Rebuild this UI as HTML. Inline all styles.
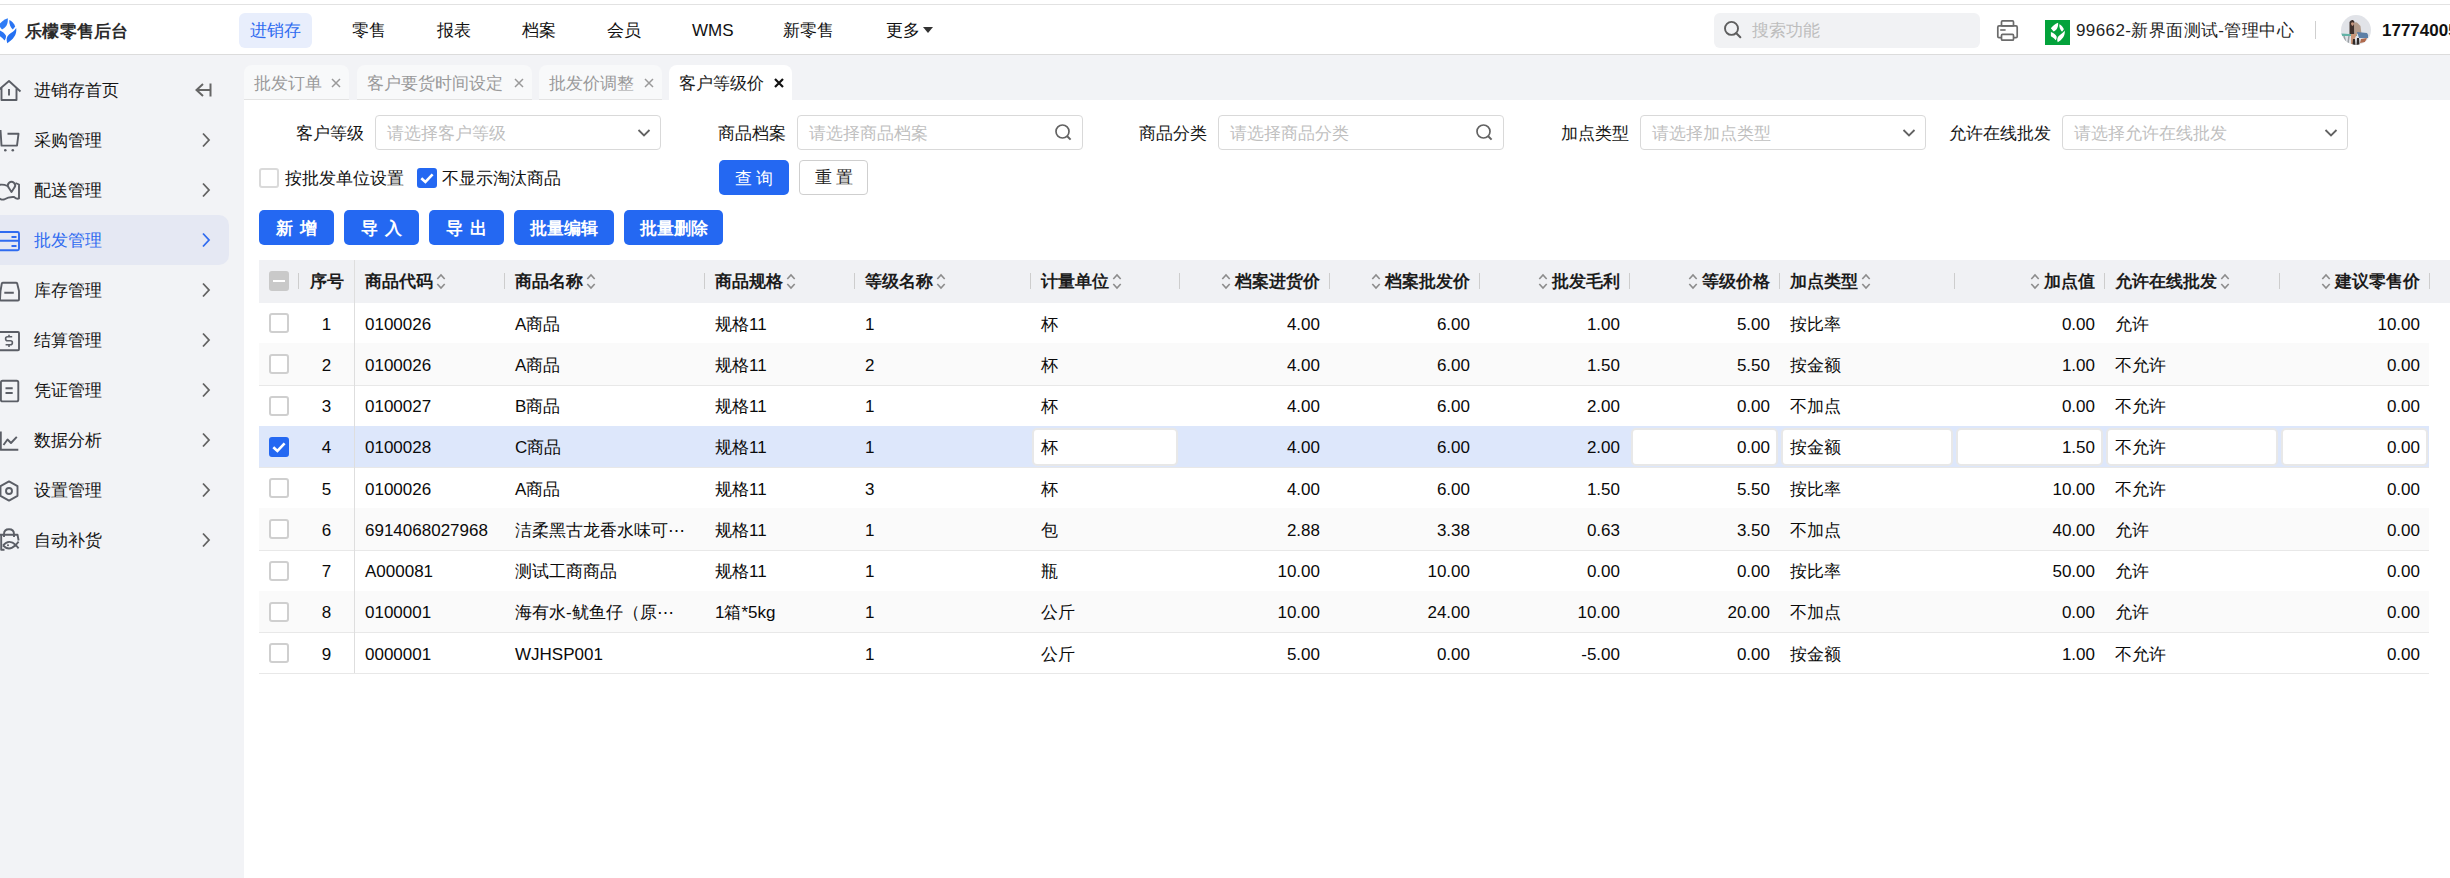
<!DOCTYPE html>
<html><head><meta charset="utf-8">
<style>
*{box-sizing:border-box;margin:0;padding:0}
html,body{width:2450px;height:878px;overflow:hidden;background:#fff}
body{position:relative;font-family:"Liberation Sans",sans-serif;font-size:17px;color:#111}
.abs{position:absolute}
.t{position:absolute;white-space:nowrap;line-height:20px}
#topline{left:0;top:4px;width:2450px;height:1px;background:#e2e2e2}
#hdr{left:0;top:5px;width:2450px;height:49px;background:#fff}
#hdrb{left:0;top:54px;width:2450px;height:1px;background:#dcdcdc}
#side{left:0;top:55px;width:244px;height:823px;background:#f2f3f6}
#tabbar{left:244px;top:55px;width:2206px;height:45px;background:#f2f3f6}
.tab{position:absolute;top:65px;height:35px;background:#f8f9fa;border-radius:8px 8px 0 0;border-bottom:1px solid #e3e3e3;color:#9a9a9a;line-height:37px;padding-left:10px;white-space:nowrap}
.tab.on{background:#fff;border-bottom:none;color:#1a1a1a;line-height:37px}
.x{position:absolute;top:0}
.nav{position:absolute;top:13px;height:35px;line-height:35px;white-space:nowrap;color:#111}
.side-item{position:absolute;left:0;width:229px;height:50px}
.side-item.on{background:#e5e8f3;border-radius:0 10px 10px 0}
.lbl{position:absolute;white-space:nowrap;line-height:37px;top:115px;color:#161616}
.inp{position:absolute;top:115px;width:286px;height:35px;border:1px solid #d9d9d9;border-radius:4px;background:#fff}
.ph{position:absolute;left:11px;top:0;line-height:35px;color:#bfbfbf;white-space:nowrap}
.btn{position:absolute;top:210px;height:35px;background:#2468f2;border-radius:5px;color:#fff;text-align:center;line-height:37px;font-weight:bold;white-space:nowrap}
.cb{position:absolute;width:20px;height:20px;border:2px solid #cfcfcf;border-radius:3px;background:#fff}
.cb.on{background:#2468f2;border-color:#2468f2}
.th{position:absolute;top:260px;height:43px;line-height:43px;font-weight:bold;color:#1c1c1c;white-space:nowrap}
.sep{position:absolute;top:273px;width:1px;height:16px;background:#cdcdcd}
.td{position:absolute;line-height:20px;white-space:nowrap;color:#0a0a0a}
.row{position:absolute;left:259px;width:2170px}
.edit{position:absolute;background:#fff;border:2px solid #e8e8e8;border-radius:5px}
</style></head><body>
<div class="abs" id="topline"></div>
<div class="abs" id="hdr"></div>
<div class="abs" id="hdrb"></div>
<div class="abs" id="side"></div>
<div class="abs" id="tabbar"></div>

<svg class="abs" style="left:0;top:14px;overflow:visible" width="24" height="32" viewBox="0 14 24 32">
<path d="M7.8 18.2 C3.5 19.8 0.5 22.5 -1.5 25.2 L2 29.4 C5.6 27.8 8.2 24.5 7.8 18.2Z" fill="#2e7cf6"/>
<path d="M9.3 20 C9 24 10.5 27.5 12.8 29.6 L15.2 26.4 C14 23.5 12 21.2 9.3 20Z" fill="#2a74f3"/>
<path d="M-1.5 30 C1.5 31 4.5 33 5.9 35.6 C6.2 37.3 5.6 39 4.6 40.4 C2.5 38 0.5 36.5 -1.5 35.5Z" fill="#2a74f3"/>
<path d="M16.2 28 C17.2 34.8 12.8 39.8 7.3 43.2 C6 40 6.6 36.5 9 34.6 C11.5 32.5 14.5 31 16.2 28Z" fill="#2470f2"/>
</svg>
<div class="t" style="left:25px;top:22px;font-weight:bold;font-size:17px;letter-spacing:0.3px;color:#2b2b2b">乐檬零售后台</div>
<div class="abs" style="left:239px;top:13px;width:73px;height:35px;background:#e8eefc;border-radius:6px"></div>

<div class="nav" style="left:250px;color:#2f6bf0;">进销存</div>
<div class="nav" style="left:352px;">零售</div>
<div class="nav" style="left:437px;">报表</div>
<div class="nav" style="left:522px;">档案</div>
<div class="nav" style="left:607px;">会员</div>
<div class="nav" style="left:692px;">WMS</div>
<div class="nav" style="left:783px;">新零售</div>
<div class="nav" style="left:886px;">更多</div>
<svg class="abs" style="left:923px;top:27px" width="10" height="6"><path d="M0 0 L10 0 L5 6Z" fill="#333"/></svg>
<div class="abs" style="left:1714px;top:13px;width:266px;height:35px;background:#f1f2f4;border-radius:6px"></div>
<svg class="abs" style="left:1715px;top:15px" width="35" height="30" viewBox="0 0 35 30"><circle cx="16.5" cy="13.4" r="6.5" fill="none" stroke="#5e5e5e" stroke-width="1.9"/><path d="M21.3 18.3 L25.3 22.2" stroke="#5e5e5e" stroke-width="2.1" stroke-linecap="round"/></svg>
<div class="t" style="left:1752px;top:21px;color:#bdbdbd">搜索功能</div>
<svg class="abs" style="left:1990px;top:15px" width="35" height="30" viewBox="1990 15 35 30"><g fill="none" stroke="#6b6b6b" stroke-width="1.7"><rect x="2001.5" y="20.9" width="12" height="5" rx="1"/><path d="M2001 37.6 H1999 Q1997.8 37.6 1997.8 36.4 V27.2 Q1997.8 25.9 1999 25.9 H2016 Q2017.2 25.9 2017.2 27.2 V36.4 Q2017.2 37.6 2016 37.6 H2014"/><rect x="2001.5" y="34.4" width="12" height="5.8" rx="1"/><path d="M2000.2 30 H2005.6" stroke-width="1.6"/></g></svg>
<div class="abs" style="left:2045px;top:20px;width:25px;height:25px;background:#03a23b"></div>
<svg class="abs" style="left:2045px;top:20px" width="25" height="25" viewBox="0 0 25 25"><g transform="translate(12.9 12.6) scale(0.78) translate(-7.5 -30.7)" fill="#fff">
<path d="M7.8 18.2 C3.5 19.8 0.5 22.5 -1.5 25.2 L2 29.4 C5.6 27.8 8.2 24.5 7.8 18.2Z"/>
<path d="M9.3 20 C9 24 10.5 27.5 12.8 29.6 L15.2 26.4 C14 23.5 12 21.2 9.3 20Z"/>
<path d="M-1.5 30 C1.5 31 4.5 33 5.9 35.6 C6.2 37.3 5.6 39 4.6 40.4 C2.5 38 0.5 36.5 -1.5 35.5Z"/>
<path d="M16.2 28 C17.2 34.8 12.8 39.8 7.3 43.2 C6 40 6.6 36.5 9 34.6 C11.5 32.5 14.5 31 16.2 28Z"/>
</g></svg>
<div class="t" style="left:2076px;top:21px;color:#1f1f1f;letter-spacing:0.4px">99662-新界面测试-管理中心</div>
<div class="abs" style="left:2315px;top:21px;width:1px;height:18px;background:#cfcfcf"></div>
<svg class="abs" style="left:2341px;top:15px" width="30" height="30" viewBox="0 0 30 30"><defs><clipPath id="av"><circle cx="15" cy="15" r="15"/></clipPath></defs><g clip-path="url(#av)"><rect width="30" height="30" fill="#e1e3e8"/>
<path d="M0 18.5 L16 19.5 L16 21 L0 21 Z" fill="#62b2a6"/>
<path d="M3 21 L5 28 M8 21 L7 28" stroke="#9aa0a4" stroke-width="1.5"/>
<path d="M8.5 7 Q10 4.5 12 5 Q14 6 13.5 9 L13.5 19 L8.5 19 Z" fill="#3e302c"/>
<path d="M13 8 Q15 6.5 17 8.5 L19.5 11 L20.5 19 L13.5 19 Z" fill="#b39c8c"/>
<path d="M10 8 Q11.5 6.5 13 8 Q13 10.5 11.5 11 Q10 10.5 10 8Z" fill="#c89880"/>
<path d="M16 17 L26 18 Q28 20 27 23 L18 23 Z" fill="#5d7fa6"/>
<path d="M10 19 L16 19 L14 23 L12 29 L10 29 Z" fill="#c99578"/>
<path d="M12 24 L14 24 L14.5 30 L11.5 30 Z M16 23 L18 23 L18.5 30 L15.5 30 Z" fill="#2f2a28"/>
<path d="M20 24 L26 23 L24 27 L19 28 Z" fill="#b06a4c"/>
</g></svg>
<div class="t" style="left:2382px;top:21px;font-weight:bold;font-size:17px;color:#111">17774005</div>

<div class="t" style="left:34px;top:81px;color:#141414">进销存首页</div>
<svg class="abs" style="left:194px;top:82px" width="18" height="16" viewBox="0 0 18 16"><path d="M9 2 L2.5 8 L9 14 M2.5 8 H15.5 M16.5 1.5 V14.5" fill="none" stroke="#666" stroke-width="2"/></svg>
<div class="t" style="left:34px;top:131px;color:#141414">采购管理</div>
<svg class="abs" style="left:200px;top:132px" width="12" height="16" viewBox="0 0 12 16"><path d="M3 1.5 L9 8 L3 14.5" fill="none" stroke="#626262" stroke-width="1.8"/></svg>
<div class="t" style="left:34px;top:181px;color:#141414">配送管理</div>
<svg class="abs" style="left:200px;top:182px" width="12" height="16" viewBox="0 0 12 16"><path d="M3 1.5 L9 8 L3 14.5" fill="none" stroke="#626262" stroke-width="1.8"/></svg>
<div class="side-item on" style="top:215px"></div>
<div class="t" style="left:34px;top:231px;color:#2f6bf0">批发管理</div>
<svg class="abs" style="left:200px;top:232px" width="12" height="16" viewBox="0 0 12 16"><path d="M3 1.5 L9 8 L3 14.5" fill="none" stroke="#2f6bf0" stroke-width="1.8"/></svg>
<div class="t" style="left:34px;top:281px;color:#141414">库存管理</div>
<svg class="abs" style="left:200px;top:282px" width="12" height="16" viewBox="0 0 12 16"><path d="M3 1.5 L9 8 L3 14.5" fill="none" stroke="#626262" stroke-width="1.8"/></svg>
<div class="t" style="left:34px;top:331px;color:#141414">结算管理</div>
<svg class="abs" style="left:200px;top:332px" width="12" height="16" viewBox="0 0 12 16"><path d="M3 1.5 L9 8 L3 14.5" fill="none" stroke="#626262" stroke-width="1.8"/></svg>
<div class="t" style="left:34px;top:381px;color:#141414">凭证管理</div>
<svg class="abs" style="left:200px;top:382px" width="12" height="16" viewBox="0 0 12 16"><path d="M3 1.5 L9 8 L3 14.5" fill="none" stroke="#626262" stroke-width="1.8"/></svg>
<div class="t" style="left:34px;top:431px;color:#141414">数据分析</div>
<svg class="abs" style="left:200px;top:432px" width="12" height="16" viewBox="0 0 12 16"><path d="M3 1.5 L9 8 L3 14.5" fill="none" stroke="#626262" stroke-width="1.8"/></svg>
<div class="t" style="left:34px;top:481px;color:#141414">设置管理</div>
<svg class="abs" style="left:200px;top:482px" width="12" height="16" viewBox="0 0 12 16"><path d="M3 1.5 L9 8 L3 14.5" fill="none" stroke="#626262" stroke-width="1.8"/></svg>
<div class="t" style="left:34px;top:531px;color:#141414">自动补货</div>
<svg class="abs" style="left:200px;top:532px" width="12" height="16" viewBox="0 0 12 16"><path d="M3 1.5 L9 8 L3 14.5" fill="none" stroke="#626262" stroke-width="1.8"/></svg>
<svg class="abs" style="left:0;top:0;overflow:visible" width="30" height="600" viewBox="0 0 30 600">
<g fill="none" stroke="#5b5e66" stroke-width="1.9" stroke-linejoin="round">
<path d="M-1 89.5 L9 81 L20.5 91.5 M1.5 88 V100 H16.5 V87.5 M9 89 V95.5"/>
<path d="M0.5 130 L1.5 145.6 H17 L18.5 133.8 H7.5"/>
<path d="M-1 185 Q3 184 7.5 186 M15.5 183 L19 184.5 V198.5 Q17 199.5 14 197 Q9 196.5 4 199.5 Q1 200 -1 198"/>
<path d="M11.5 192 L8.6 187.6 A3.6 3.6 0 1 1 14.4 187.6 Z"/>
<path d="M-3 232 H17.5 Q19 232 19 233.5 V248.7 Q19 250.2 17.5 250.2 H-3 M-3 240.8 H19 M11.5 237 H16.5 M11.5 246 H16.5" stroke="#2f6bf0"/>
<path d="M0.5 291 L1.8 283.5 Q2.2 282.7 3 282.7 H16 Q16.8 282.7 17.2 283.5 L19 291 V299.5 Q19 300.5 18 300.5 H1 Q0 300.5 0 299.5 Z M4.3 292.8 H13.8"/>
<path d="M-3 332 H18 Q19 332 19 333 V349.2 Q19 350.2 18 350.2 H-3"/>
<path d="M12.2 336.8 H7.6 Q5.6 336.8 5.6 338.8 Q5.6 340.8 7.6 340.8 H10.4 Q12.4 340.8 12.4 342.8 Q12.4 344.8 10.4 344.8 H5.6 M9 334.8 V336.8 M9 344.8 V347" stroke-width="1.6"/>
<path d="M2.5 380.7 H16.7 Q18.3 380.7 18.3 382.3 V399.8 Q18.3 401.4 16.7 401.4 H2.5 Q0.9 401.4 0.9 399.8 V382.3 Q0.9 380.7 2.5 380.7 Z M5.5 388.2 H12.7 M5.5 393 H12.7"/>
<path d="M0.8 431.5 V449.8 H18.3 M3.5 445 L7.5 439.5 L11 443 L16.8 436.8"/>
<path d="M9 481.4 L17.5 486.2 V495.8 L9 500.6 L0.5 495.8 V486.2 Z"/>
<circle cx="9" cy="491" r="3"/>
<path d="M4 537 V534 Q4 529.2 9 529.2 Q14 529.2 14 534 V537 M0 534.8 H17.5 L18.6 540.5 M1.2 535 V549.7 H4.5 M3 545.5 Q9 538.5 15.8 545 Q9 551.5 3 545.5 M15.8 545 L18.6 541.6 M15.8 545 L18.6 548.4"/>
</g>
<circle cx="5.3" cy="150.3" r="1.3" fill="#5b5e66"/><circle cx="12.8" cy="150.3" r="1.3" fill="#5b5e66"/><circle cx="8" cy="545.2" r="1" fill="#5b5e66"/>
</svg>
<div class="tab" style="left:244px;width:105px">批发订单</div>
<svg class="abs" style="left:331px;top:78px" width="10" height="10" viewBox="0 0 10 10"><path d="M1 1 L9 9 M9 1 L1 9" stroke="#9a9a9a" stroke-width="1.5"/></svg>
<div class="tab" style="left:357px;width:175px">客户要货时间设定</div>
<svg class="abs" style="left:514px;top:78px" width="10" height="10" viewBox="0 0 10 10"><path d="M1 1 L9 9 M9 1 L1 9" stroke="#9a9a9a" stroke-width="1.5"/></svg>
<div class="tab" style="left:539px;width:123px">批发价调整</div>
<svg class="abs" style="left:644px;top:78px" width="10" height="10" viewBox="0 0 10 10"><path d="M1 1 L9 9 M9 1 L1 9" stroke="#9a9a9a" stroke-width="1.5"/></svg>
<div class="tab on" style="left:669px;width:123px">客户等级价</div>
<svg class="abs" style="left:774px;top:78px" width="10" height="10" viewBox="0 0 10 10"><path d="M1 1 L9 9 M9 1 L1 9" stroke="#111" stroke-width="2.2"/></svg>
<div class="lbl" style="left:164px;width:200px;text-align:right">客户等级</div>
<div class="inp" style="left:375px"><div class="ph">请选择客户等级</div></div>
<svg class="abs" style="left:637px;top:128px" width="14" height="10" viewBox="0 0 14 10"><path d="M1.5 2 L7 7.5 L12.5 2" fill="none" stroke="#626262" stroke-width="1.8"/></svg>
<div class="lbl" style="left:586px;width:200px;text-align:right">商品档案</div>
<div class="inp" style="left:797px"><div class="ph">请选择商品档案</div></div>
<svg class="abs" style="left:1054px;top:123px" width="20" height="20" viewBox="0 0 20 20"><circle cx="8.5" cy="8.5" r="6.5" fill="none" stroke="#626262" stroke-width="1.7"/><path d="M13.2 13.2 L16.6 16.6" stroke="#626262" stroke-width="2" stroke-linecap="butt"/></svg>
<div class="lbl" style="left:1007px;width:200px;text-align:right">商品分类</div>
<div class="inp" style="left:1218px"><div class="ph">请选择商品分类</div></div>
<svg class="abs" style="left:1475px;top:123px" width="20" height="20" viewBox="0 0 20 20"><circle cx="8.5" cy="8.5" r="6.5" fill="none" stroke="#626262" stroke-width="1.7"/><path d="M13.2 13.2 L16.6 16.6" stroke="#626262" stroke-width="2" stroke-linecap="butt"/></svg>
<div class="lbl" style="left:1429px;width:200px;text-align:right">加点类型</div>
<div class="inp" style="left:1640px"><div class="ph">请选择加点类型</div></div>
<svg class="abs" style="left:1902px;top:128px" width="14" height="10" viewBox="0 0 14 10"><path d="M1.5 2 L7 7.5 L12.5 2" fill="none" stroke="#626262" stroke-width="1.8"/></svg>
<div class="lbl" style="left:1851px;width:200px;text-align:right">允许在线批发</div>
<div class="inp" style="left:2062px"><div class="ph">请选择允许在线批发</div></div>
<svg class="abs" style="left:2324px;top:128px" width="14" height="10" viewBox="0 0 14 10"><path d="M1.5 2 L7 7.5 L12.5 2" fill="none" stroke="#626262" stroke-width="1.8"/></svg>
<div class="cb" style="left:259px;top:168px;border-color:#dadada"></div>
<div class="t" style="left:285px;top:169px">按批发单位设置</div>
<div class="cb on" style="left:417px;top:168px"></div>
<svg class="abs" style="left:417px;top:168px" width="20" height="20" viewBox="0 0 20 20"><path d="M4.3 10.2 L8.4 14 L15.6 6.4" fill="none" stroke="#fff" stroke-width="2.6"/></svg>
<div class="t" style="left:442px;top:169px">不显示淘汰商品</div>
<div class="btn" style="left:719px;top:160px;width:70px;letter-spacing:4px;text-indent:4px;font-weight:normal">查询</div>
<div class="abs" style="left:799px;top:160px;width:69px;height:35px;border:1px solid #cfcfcf;border-radius:4px;background:#fff;text-align:center;line-height:33px;letter-spacing:4px;text-indent:4px;color:#222">重置</div>
<div class="btn" style="left:259px;width:75px;letter-spacing:7px;text-indent:7px;">新增</div>
<div class="btn" style="left:344px;width:75px;letter-spacing:7px;text-indent:7px;">导入</div>
<div class="btn" style="left:429px;width:75px;letter-spacing:7px;text-indent:7px;">导出</div>
<div class="btn" style="left:514px;width:100px;">批量编辑</div>
<div class="btn" style="left:624px;width:99px;">批量删除</div>
<div class="abs" style="left:259px;top:260px;width:2191px;height:43px;background:#f0f1f4"></div>
<div class="row" style="top:343.25px;height:1px;background:#e8e8e8"></div>
<div class="row" style="top:343.25px;height:41.25px;background:#fafafa"></div>
<div class="row" style="top:384.50px;height:1px;background:#e8e8e8"></div>
<div class="row" style="top:425.75px;height:1px;background:#e8e8e8"></div>
<div class="row" style="top:425.75px;height:41.25px;background:#dde7fb"></div>
<div class="row" style="top:467.00px;height:1px;background:#e8e8e8"></div>
<div class="row" style="top:508.25px;height:1px;background:#e8e8e8"></div>
<div class="row" style="top:508.25px;height:41.25px;background:#fafafa"></div>
<div class="row" style="top:549.50px;height:1px;background:#e8e8e8"></div>
<div class="row" style="top:590.75px;height:1px;background:#e8e8e8"></div>
<div class="row" style="top:590.75px;height:41.25px;background:#fafafa"></div>
<div class="row" style="top:632.00px;height:1px;background:#e8e8e8"></div>
<div class="row" style="top:673.25px;height:1px;background:#e8e8e8"></div>
<div class="abs" style="left:354px;top:260px;width:1px;height:413px;background:#dedede"></div>
<div class="abs" style="left:269px;top:271px;width:20px;height:20px;background:#c9c9c9;border-radius:3px"></div>
<div class="abs" style="left:273px;top:280px;width:12px;height:2px;background:#fff"></div>
<div class="sep" style="left:298px"></div>
<div class="th" style="left:299px;width:55px;text-align:center">序号</div>
<div class="th" style="left:365px">商品代码<svg style="display:inline-block;vertical-align:middle;margin:-3px 2px 0 3px" width="10" height="17" viewBox="0 0 10 17"><path d="M1.3 6 L5 2 L8.7 6 M1.3 11 L5 15 L8.7 11" fill="none" stroke="#8c8c8c" stroke-width="1.6"/></svg></div>
<div class="sep" style="left:504px"></div>
<div class="th" style="left:515px">商品名称<svg style="display:inline-block;vertical-align:middle;margin:-3px 2px 0 3px" width="10" height="17" viewBox="0 0 10 17"><path d="M1.3 6 L5 2 L8.7 6 M1.3 11 L5 15 L8.7 11" fill="none" stroke="#8c8c8c" stroke-width="1.6"/></svg></div>
<div class="sep" style="left:704px"></div>
<div class="th" style="left:715px">商品规格<svg style="display:inline-block;vertical-align:middle;margin:-3px 2px 0 3px" width="10" height="17" viewBox="0 0 10 17"><path d="M1.3 6 L5 2 L8.7 6 M1.3 11 L5 15 L8.7 11" fill="none" stroke="#8c8c8c" stroke-width="1.6"/></svg></div>
<div class="sep" style="left:854px"></div>
<div class="th" style="left:865px">等级名称<svg style="display:inline-block;vertical-align:middle;margin:-3px 2px 0 3px" width="10" height="17" viewBox="0 0 10 17"><path d="M1.3 6 L5 2 L8.7 6 M1.3 11 L5 15 L8.7 11" fill="none" stroke="#8c8c8c" stroke-width="1.6"/></svg></div>
<div class="sep" style="left:1030px"></div>
<div class="th" style="left:1041px">计量单位<svg style="display:inline-block;vertical-align:middle;margin:-3px 2px 0 3px" width="10" height="17" viewBox="0 0 10 17"><path d="M1.3 6 L5 2 L8.7 6 M1.3 11 L5 15 L8.7 11" fill="none" stroke="#8c8c8c" stroke-width="1.6"/></svg></div>
<div class="sep" style="left:1179px"></div>
<div class="th" style="left:1179px;width:141px;text-align:right"><svg style="display:inline-block;vertical-align:middle;margin:-3px 4px 0 0" width="10" height="17" viewBox="0 0 10 17"><path d="M1.3 6 L5 2 L8.7 6 M1.3 11 L5 15 L8.7 11" fill="none" stroke="#8c8c8c" stroke-width="1.6"/></svg>档案进货价</div>
<div class="sep" style="left:1329px"></div>
<div class="th" style="left:1329px;width:141px;text-align:right"><svg style="display:inline-block;vertical-align:middle;margin:-3px 4px 0 0" width="10" height="17" viewBox="0 0 10 17"><path d="M1.3 6 L5 2 L8.7 6 M1.3 11 L5 15 L8.7 11" fill="none" stroke="#8c8c8c" stroke-width="1.6"/></svg>档案批发价</div>
<div class="sep" style="left:1479px"></div>
<div class="th" style="left:1479px;width:141px;text-align:right"><svg style="display:inline-block;vertical-align:middle;margin:-3px 4px 0 0" width="10" height="17" viewBox="0 0 10 17"><path d="M1.3 6 L5 2 L8.7 6 M1.3 11 L5 15 L8.7 11" fill="none" stroke="#8c8c8c" stroke-width="1.6"/></svg>批发毛利</div>
<div class="sep" style="left:1629px"></div>
<div class="th" style="left:1629px;width:141px;text-align:right"><svg style="display:inline-block;vertical-align:middle;margin:-3px 4px 0 0" width="10" height="17" viewBox="0 0 10 17"><path d="M1.3 6 L5 2 L8.7 6 M1.3 11 L5 15 L8.7 11" fill="none" stroke="#8c8c8c" stroke-width="1.6"/></svg>等级价格</div>
<div class="sep" style="left:1779px"></div>
<div class="th" style="left:1790px">加点类型<svg style="display:inline-block;vertical-align:middle;margin:-3px 2px 0 3px" width="10" height="17" viewBox="0 0 10 17"><path d="M1.3 6 L5 2 L8.7 6 M1.3 11 L5 15 L8.7 11" fill="none" stroke="#8c8c8c" stroke-width="1.6"/></svg></div>
<div class="sep" style="left:1954px"></div>
<div class="th" style="left:1954px;width:141px;text-align:right"><svg style="display:inline-block;vertical-align:middle;margin:-3px 4px 0 0" width="10" height="17" viewBox="0 0 10 17"><path d="M1.3 6 L5 2 L8.7 6 M1.3 11 L5 15 L8.7 11" fill="none" stroke="#8c8c8c" stroke-width="1.6"/></svg>加点值</div>
<div class="sep" style="left:2104px"></div>
<div class="th" style="left:2115px">允许在线批发<svg style="display:inline-block;vertical-align:middle;margin:-3px 2px 0 3px" width="10" height="17" viewBox="0 0 10 17"><path d="M1.3 6 L5 2 L8.7 6 M1.3 11 L5 15 L8.7 11" fill="none" stroke="#8c8c8c" stroke-width="1.6"/></svg></div>
<div class="sep" style="left:2279px"></div>
<div class="th" style="left:2279px;width:141px;text-align:right"><svg style="display:inline-block;vertical-align:middle;margin:-3px 4px 0 0" width="10" height="17" viewBox="0 0 10 17"><path d="M1.3 6 L5 2 L8.7 6 M1.3 11 L5 15 L8.7 11" fill="none" stroke="#8c8c8c" stroke-width="1.6"/></svg>建议零售价</div>
<div class="sep" style="left:2429px"></div>
<div class="cb" style="left:269px;top:313.0px"></div>
<div class="td" style="left:299px;width:55px;top:314.5px;text-align:center">1</div>
<div class="td" style="left:365px;top:314.5px">0100026</div>
<div class="td" style="left:515px;top:314.5px">A商品</div>
<div class="td" style="left:715px;top:314.5px">规格11</div>
<div class="td" style="left:865px;top:314.5px">1</div>
<div class="td" style="left:1041px;top:314.5px">杯</div>
<div class="td" style="left:1179px;width:141px;top:314.5px;text-align:right">4.00</div>
<div class="td" style="left:1329px;width:141px;top:314.5px;text-align:right">6.00</div>
<div class="td" style="left:1479px;width:141px;top:314.5px;text-align:right">1.00</div>
<div class="td" style="left:1629px;width:141px;top:314.5px;text-align:right">5.00</div>
<div class="td" style="left:1790px;top:314.5px">按比率</div>
<div class="td" style="left:1954px;width:141px;top:314.5px;text-align:right">0.00</div>
<div class="td" style="left:2115px;top:314.5px">允许</div>
<div class="td" style="left:2279px;width:141px;top:314.5px;text-align:right">10.00</div>
<div class="cb" style="left:269px;top:354.2px"></div>
<div class="td" style="left:299px;width:55px;top:355.8px;text-align:center">2</div>
<div class="td" style="left:365px;top:355.8px">0100026</div>
<div class="td" style="left:515px;top:355.8px">A商品</div>
<div class="td" style="left:715px;top:355.8px">规格11</div>
<div class="td" style="left:865px;top:355.8px">2</div>
<div class="td" style="left:1041px;top:355.8px">杯</div>
<div class="td" style="left:1179px;width:141px;top:355.8px;text-align:right">4.00</div>
<div class="td" style="left:1329px;width:141px;top:355.8px;text-align:right">6.00</div>
<div class="td" style="left:1479px;width:141px;top:355.8px;text-align:right">1.50</div>
<div class="td" style="left:1629px;width:141px;top:355.8px;text-align:right">5.50</div>
<div class="td" style="left:1790px;top:355.8px">按金额</div>
<div class="td" style="left:1954px;width:141px;top:355.8px;text-align:right">1.00</div>
<div class="td" style="left:2115px;top:355.8px">不允许</div>
<div class="td" style="left:2279px;width:141px;top:355.8px;text-align:right">0.00</div>
<div class="cb" style="left:269px;top:395.5px"></div>
<div class="td" style="left:299px;width:55px;top:397.0px;text-align:center">3</div>
<div class="td" style="left:365px;top:397.0px">0100027</div>
<div class="td" style="left:515px;top:397.0px">B商品</div>
<div class="td" style="left:715px;top:397.0px">规格11</div>
<div class="td" style="left:865px;top:397.0px">1</div>
<div class="td" style="left:1041px;top:397.0px">杯</div>
<div class="td" style="left:1179px;width:141px;top:397.0px;text-align:right">4.00</div>
<div class="td" style="left:1329px;width:141px;top:397.0px;text-align:right">6.00</div>
<div class="td" style="left:1479px;width:141px;top:397.0px;text-align:right">2.00</div>
<div class="td" style="left:1629px;width:141px;top:397.0px;text-align:right">0.00</div>
<div class="td" style="left:1790px;top:397.0px">不加点</div>
<div class="td" style="left:1954px;width:141px;top:397.0px;text-align:right">0.00</div>
<div class="td" style="left:2115px;top:397.0px">不允许</div>
<div class="td" style="left:2279px;width:141px;top:397.0px;text-align:right">0.00</div>
<div class="cb on" style="left:269px;top:436.8px"></div>
<svg class="abs" style="left:269px;top:436.8px" width="20" height="20" viewBox="0 0 20 20"><path d="M4.3 10.2 L8.4 14 L15.6 6.4" fill="none" stroke="#fff" stroke-width="2.6"/></svg>
<div class="td" style="left:299px;width:55px;top:438.2px;text-align:center">4</div>
<div class="td" style="left:365px;top:438.2px">0100028</div>
<div class="td" style="left:515px;top:438.2px">C商品</div>
<div class="td" style="left:715px;top:438.2px">规格11</div>
<div class="td" style="left:865px;top:438.2px">1</div>
<div class="edit" style="left:1032px;top:428.00px;width:146px;height:37.5px"></div>
<div class="td" style="left:1041px;top:438.2px">杯</div>
<div class="td" style="left:1179px;width:141px;top:438.2px;text-align:right">4.00</div>
<div class="td" style="left:1329px;width:141px;top:438.2px;text-align:right">6.00</div>
<div class="td" style="left:1479px;width:141px;top:438.2px;text-align:right">2.00</div>
<div class="edit" style="left:1631px;top:428.00px;width:147px;height:37.5px"></div>
<div class="td" style="left:1629px;width:141px;top:438.2px;text-align:right">0.00</div>
<div class="edit" style="left:1781px;top:428.00px;width:172px;height:37.5px"></div>
<div class="td" style="left:1790px;top:438.2px">按金额</div>
<div class="edit" style="left:1956px;top:428.00px;width:147px;height:37.5px"></div>
<div class="td" style="left:1954px;width:141px;top:438.2px;text-align:right">1.50</div>
<div class="edit" style="left:2106px;top:428.00px;width:172px;height:37.5px"></div>
<div class="td" style="left:2115px;top:438.2px">不允许</div>
<div class="edit" style="left:2281px;top:428.00px;width:147px;height:37.5px"></div>
<div class="td" style="left:2279px;width:141px;top:438.2px;text-align:right">0.00</div>
<div class="cb" style="left:269px;top:478.0px"></div>
<div class="td" style="left:299px;width:55px;top:479.5px;text-align:center">5</div>
<div class="td" style="left:365px;top:479.5px">0100026</div>
<div class="td" style="left:515px;top:479.5px">A商品</div>
<div class="td" style="left:715px;top:479.5px">规格11</div>
<div class="td" style="left:865px;top:479.5px">3</div>
<div class="td" style="left:1041px;top:479.5px">杯</div>
<div class="td" style="left:1179px;width:141px;top:479.5px;text-align:right">4.00</div>
<div class="td" style="left:1329px;width:141px;top:479.5px;text-align:right">6.00</div>
<div class="td" style="left:1479px;width:141px;top:479.5px;text-align:right">1.50</div>
<div class="td" style="left:1629px;width:141px;top:479.5px;text-align:right">5.50</div>
<div class="td" style="left:1790px;top:479.5px">按比率</div>
<div class="td" style="left:1954px;width:141px;top:479.5px;text-align:right">10.00</div>
<div class="td" style="left:2115px;top:479.5px">不允许</div>
<div class="td" style="left:2279px;width:141px;top:479.5px;text-align:right">0.00</div>
<div class="cb" style="left:269px;top:519.2px"></div>
<div class="td" style="left:299px;width:55px;top:520.8px;text-align:center">6</div>
<div class="td" style="left:365px;top:520.8px">6914068027968</div>
<div class="td" style="left:515px;top:520.8px">洁柔黑古龙香水味可⋯</div>
<div class="td" style="left:715px;top:520.8px">规格11</div>
<div class="td" style="left:865px;top:520.8px">1</div>
<div class="td" style="left:1041px;top:520.8px">包</div>
<div class="td" style="left:1179px;width:141px;top:520.8px;text-align:right">2.88</div>
<div class="td" style="left:1329px;width:141px;top:520.8px;text-align:right">3.38</div>
<div class="td" style="left:1479px;width:141px;top:520.8px;text-align:right">0.63</div>
<div class="td" style="left:1629px;width:141px;top:520.8px;text-align:right">3.50</div>
<div class="td" style="left:1790px;top:520.8px">不加点</div>
<div class="td" style="left:1954px;width:141px;top:520.8px;text-align:right">40.00</div>
<div class="td" style="left:2115px;top:520.8px">允许</div>
<div class="td" style="left:2279px;width:141px;top:520.8px;text-align:right">0.00</div>
<div class="cb" style="left:269px;top:560.5px"></div>
<div class="td" style="left:299px;width:55px;top:562.0px;text-align:center">7</div>
<div class="td" style="left:365px;top:562.0px">A000081</div>
<div class="td" style="left:515px;top:562.0px">测试工商商品</div>
<div class="td" style="left:715px;top:562.0px">规格11</div>
<div class="td" style="left:865px;top:562.0px">1</div>
<div class="td" style="left:1041px;top:562.0px">瓶</div>
<div class="td" style="left:1179px;width:141px;top:562.0px;text-align:right">10.00</div>
<div class="td" style="left:1329px;width:141px;top:562.0px;text-align:right">10.00</div>
<div class="td" style="left:1479px;width:141px;top:562.0px;text-align:right">0.00</div>
<div class="td" style="left:1629px;width:141px;top:562.0px;text-align:right">0.00</div>
<div class="td" style="left:1790px;top:562.0px">按比率</div>
<div class="td" style="left:1954px;width:141px;top:562.0px;text-align:right">50.00</div>
<div class="td" style="left:2115px;top:562.0px">允许</div>
<div class="td" style="left:2279px;width:141px;top:562.0px;text-align:right">0.00</div>
<div class="cb" style="left:269px;top:601.8px"></div>
<div class="td" style="left:299px;width:55px;top:603.2px;text-align:center">8</div>
<div class="td" style="left:365px;top:603.2px">0100001</div>
<div class="td" style="left:515px;top:603.2px">海有水-鱿鱼仔（原⋯</div>
<div class="td" style="left:715px;top:603.2px">1箱*5kg</div>
<div class="td" style="left:865px;top:603.2px">1</div>
<div class="td" style="left:1041px;top:603.2px">公斤</div>
<div class="td" style="left:1179px;width:141px;top:603.2px;text-align:right">10.00</div>
<div class="td" style="left:1329px;width:141px;top:603.2px;text-align:right">24.00</div>
<div class="td" style="left:1479px;width:141px;top:603.2px;text-align:right">10.00</div>
<div class="td" style="left:1629px;width:141px;top:603.2px;text-align:right">20.00</div>
<div class="td" style="left:1790px;top:603.2px">不加点</div>
<div class="td" style="left:1954px;width:141px;top:603.2px;text-align:right">0.00</div>
<div class="td" style="left:2115px;top:603.2px">允许</div>
<div class="td" style="left:2279px;width:141px;top:603.2px;text-align:right">0.00</div>
<div class="cb" style="left:269px;top:643.0px"></div>
<div class="td" style="left:299px;width:55px;top:644.5px;text-align:center">9</div>
<div class="td" style="left:365px;top:644.5px">0000001</div>
<div class="td" style="left:515px;top:644.5px">WJHSP001</div>
<div class="td" style="left:865px;top:644.5px">1</div>
<div class="td" style="left:1041px;top:644.5px">公斤</div>
<div class="td" style="left:1179px;width:141px;top:644.5px;text-align:right">5.00</div>
<div class="td" style="left:1329px;width:141px;top:644.5px;text-align:right">0.00</div>
<div class="td" style="left:1479px;width:141px;top:644.5px;text-align:right">-5.00</div>
<div class="td" style="left:1629px;width:141px;top:644.5px;text-align:right">0.00</div>
<div class="td" style="left:1790px;top:644.5px">按金额</div>
<div class="td" style="left:1954px;width:141px;top:644.5px;text-align:right">1.00</div>
<div class="td" style="left:2115px;top:644.5px">不允许</div>
<div class="td" style="left:2279px;width:141px;top:644.5px;text-align:right">0.00</div>
</body></html>
